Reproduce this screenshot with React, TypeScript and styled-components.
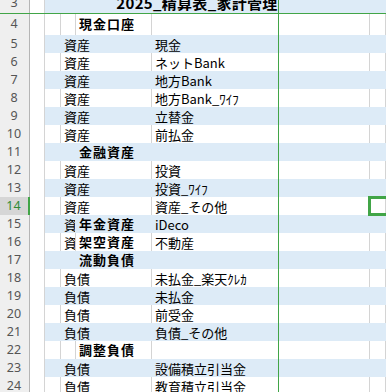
import styled, { createGlobalStyle } from 'styled-components';

const BLUE = '#ddebf7';
const GRID = '#d4d4d4';
const GREEN = '#41a547';
const COLS = '30px 15px 16px 15px 76px 127px 91px 1fr';

type Line =
  | { n: number; kind: 'title'; text: string }
  | { n: number; kind: 'section'; text: string }
  | { n: number; kind: 'item'; type: string; name: string; group?: string };

const rows: Line[] = [
  { n: 3, kind: 'title', text: '2025_精算表_家計管理' },
  { n: 4, kind: 'section', text: '現金口座' },
  { n: 5, kind: 'item', type: '資産', name: '現金' },
  { n: 6, kind: 'item', type: '資産', name: 'ネットBank' },
  { n: 7, kind: 'item', type: '資産', name: '地方Bank' },
  { n: 8, kind: 'item', type: '資産', name: '地方Bank_ﾜｲﾌ' },
  { n: 9, kind: 'item', type: '資産', name: '立替金' },
  { n: 10, kind: 'item', type: '資産', name: '前払金' },
  { n: 11, kind: 'section', text: '金融資産' },
  { n: 12, kind: 'item', type: '資産', name: '投資' },
  { n: 13, kind: 'item', type: '資産', name: '投資_ﾜｲﾌ' },
  { n: 14, kind: 'item', type: '資産', name: '資産_その他' },
  { n: 15, kind: 'item', type: '資産', name: 'iDeco', group: '年金資産' },
  { n: 16, kind: 'item', type: '資産', name: '不動産', group: '架空資産' },
  { n: 17, kind: 'section', text: '流動負債' },
  { n: 18, kind: 'item', type: '負債', name: '未払金_楽天ｸﾚｶ' },
  { n: 19, kind: 'item', type: '負債', name: '未払金' },
  { n: 20, kind: 'item', type: '負債', name: '前受金' },
  { n: 21, kind: 'item', type: '負債', name: '負債_その他' },
  { n: 22, kind: 'section', text: '調整負債' },
  { n: 23, kind: 'item', type: '負債', name: '設備積立引当金' },
  { n: 24, kind: 'item', type: '負債', name: '教育積立引当金' },
];

const ACTIVE_ROW = 14;

const heightOf = (n: number) => (n === 3 ? 20 : n === 4 ? 22 : 18);

export default function App() {
  return (
    <>
      <GlobalStyle />
      <Viewport>
        <Sheet>
          {rows.map((r) => {
            const fill = r.n % 2 === 1;
            const h = heightOf(r.n);
            return (
              <Row key={r.n} $h={h}>
                <RowHead $active={r.n === ACTIVE_ROW}>{r.n}</RowHead>
                <ColA />
                {r.kind === 'title' && (
                  <>
                    <Title $fill={fill} $span={5}>
                      {r.text}
                    </Title>
                    <Cell $fill={fill} />
                  </>
                )}
                {r.kind === 'section' && (
                  <>
                    <Cell $fill={fill} />
                    <Cell $fill={fill} />
                    <Cell $fill={fill} $bold>
                      {r.text}
                    </Cell>
                    <Cell $fill={fill} />
                    <Cell $fill={fill} />
                    <Cell $fill={fill} />
                  </>
                )}
                {r.kind === 'item' && (
                  <>
                    <Cell $fill={fill} />
                    {r.group ? (
                      <>
                        <Cell $fill={fill}>{r.type}</Cell>
                        <Cell $fill={fill} $bold>
                          {r.group}
                        </Cell>
                      </>
                    ) : (
                      <Cell $fill={fill} $span={2}>
                        {r.type}
                      </Cell>
                    )}
                    <Cell $fill={fill}>{r.name}</Cell>
                    <Cell $fill={fill} />
                    <Cell $fill={fill} />
                  </>
                )}
              </Row>
            );
          })}
        </Sheet>
        <FreezeV />
        <FreezeH />
        <Selection />
      </Viewport>
    </>
  );
}

const GlobalStyle = createGlobalStyle`
  html, body {
    margin: 0;
    padding: 0;
    background: #fff;
  }
  body {
    font-family: "Noto Sans CJK JP", "Noto Sans", sans-serif;
    color: #000;
  }
`;

const Viewport = styled.div`
  position: relative;
  width: 386px;
  height: 392px;
  overflow: hidden;
  background: #fff;
`;

const Sheet = styled.div`
  margin-top: -7px;
  display: flex;
  flex-direction: column;
`;

const Row = styled.div<{ $h: number }>`
  display: grid;
  grid-template-columns: ${COLS};
  height: ${({ $h }) => $h}px;
  line-height: ${({ $h }) => $h}px;
`;

const RowHead = styled.div<{ $active?: boolean }>`
  box-sizing: border-box;
  background: ${({ $active }) => ($active ? '#d6d6d6' : '#efefef')};
  color: ${({ $active }) => ($active ? '#2e8b36' : '#555')};
  border-right: ${({ $active }) => ($active ? `2px solid ${GREEN}` : '1px solid #b5b5b5')};
  border-bottom: 1px solid #d6d6d6;
  font-family: "Noto Sans", sans-serif;
  font-size: 12.5px;
  text-align: center;
  padding-right: 1px;
`;

const ColA = styled.div`
  box-sizing: border-box;
  background: #fff;
  border-right: 1px solid ${GRID};
  border-bottom: 1px solid ${GRID};
`;

const Cell = styled.div<{ $fill?: boolean; $span?: number; $bold?: boolean }>`
  grid-column: span ${({ $span }) => $span ?? 1};
  box-sizing: border-box;
  min-width: 0;
  background: ${({ $fill }) => ($fill ? BLUE : '#fff')};
  border-right: 1px solid ${({ $fill }) => ($fill ? BLUE : GRID)};
  padding-left: 3px;
  font-size: 13px;
  font-weight: ${({ $bold }) => ($bold ? 700 : 400)};
  letter-spacing: ${({ $bold }) => ($bold ? '1px' : '0')};
  line-height: ${({ $bold }) => ($bold ? 'inherit' : '20px')};
  white-space: nowrap;
  overflow: hidden;
`;

const Title = styled(Cell)`
  font-size: 15px;
  font-weight: 700;
  letter-spacing: 0.3px;
  line-height: inherit;
  text-align: center;
  padding-left: 0;
  padding-right: 20px;
`;

const FreezeV = styled.div`
  position: absolute;
  left: 278px;
  top: 0;
  bottom: 0;
  width: 1px;
  background: ${GREEN};
`;

const FreezeH = styled.div`
  position: absolute;
  left: 0;
  right: 0;
  top: 13px;
  height: 1px;
  background: ${GREEN};
`;

const Selection = styled.div`
  position: absolute;
  left: 368px;
  top: 196px;
  width: 90px;
  height: 20px;
  box-sizing: border-box;
  border: 3px solid ${GREEN};
`;
